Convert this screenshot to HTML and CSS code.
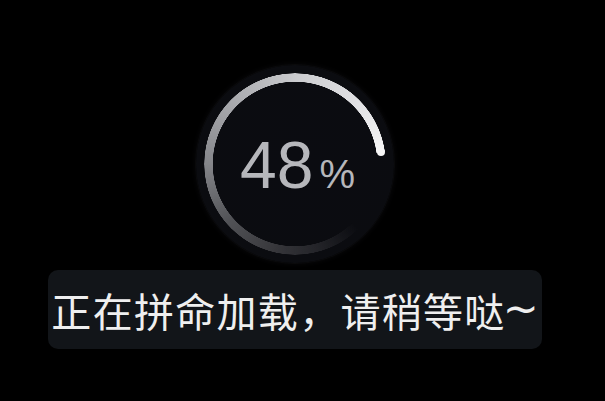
FILE: index.html
```html
<!DOCTYPE html>
<html lang="zh-CN">
<head>
<meta charset="utf-8">
<title>加载中</title>
<link rel="stylesheet" href="styles.css">
</head>
<body>
<div class="stage">
  <div class="loader">
    <div class="ring"></div>
    <div class="cap"></div>
    <div class="value"><span class="num">48</span><span class="pct">%</span></div>
  </div>
  <div class="message">正在拼命加载，请稍等哒<span class="tilde">~</span></div>
</div>
</body>
</html>
```
FILE: styles.css
```css
html, body {
  margin: 0;
  padding: 0;
  background: #000;
}
.stage {
  width: 590px;
  height: 401px;
  padding-top: 65px;
  box-sizing: border-box;
  display: flex;
  flex-direction: column;
  align-items: center;
}
.loader {
  position: relative;
  width: 198px;
  height: 198px;
  border-radius: 50%;
  background: radial-gradient(circle at 50% 50%, #0b0c11 0%, #0b0c10 85%, #101115 100%);
  box-shadow: 0 0 0 1px rgba(255,255,255,0.025), 0 0 6px rgba(40,40,50,0.3);
  display: flex;
  align-items: center;
  justify-content: center;
  flex-shrink: 0;
}
.ring {
  position: absolute;
  left: 8px;
  top: 8px;
  width: 182px;
  height: 182px;
  border-radius: 50%;
  background: conic-gradient(from 135deg,
    rgba(60,60,65,0) 0deg,
    rgba(60,60,65,0.5) 30deg,
    #38383c 60deg,
    #525357 95deg,
    #85868a 135deg,
    #a9aaae 180deg,
    #cdced1 230deg,
    #e6e6e8 280deg,
    #f6f6f6 307deg,
    rgba(0,0,0,0) 307.5deg);
  -webkit-mask: radial-gradient(circle, transparent 82px, #000 82.5px, #000 90.5px, transparent 91px);
  mask: radial-gradient(circle, transparent 82px, #000 82.5px, #000 90.5px, transparent 91px);
}
.cap {
  position: absolute;
  left: 181px;
  top: 83px;
  width: 8px;
  height: 8px;
  border-radius: 50%;
  background: #f6f6f6;
}
.value {
  position: relative;
  display: flex;
  align-items: baseline;
  color: #b6b7bb;
  font-family: "Liberation Sans", Arial, sans-serif;
  margin-top: 2px;
  margin-left: 5px;
}
.num {
  font-size: 66px;
  line-height: 1;
}
.pct {
  font-size: 40px;
  line-height: 1;
  margin-left: 6px;
}
.message {
  margin-top: 7px;
  width: 494px;
  height: 79px;
  border-radius: 10px;
  background: #121519;
  display: flex;
  align-items: center;
  justify-content: center;
  color: #efefef;
  font-family: "Noto Sans CJK SC", "Noto Sans", sans-serif;
  font-size: 40px;
  letter-spacing: 1.3px;
  white-space: nowrap;
}
.tilde {
  font-family: "DejaVu Sans", sans-serif;
  font-size: 43px;
  line-height: 1;
  letter-spacing: 0;
  margin-left: -3px;
  position: relative;
  top: -1px;
}
```
